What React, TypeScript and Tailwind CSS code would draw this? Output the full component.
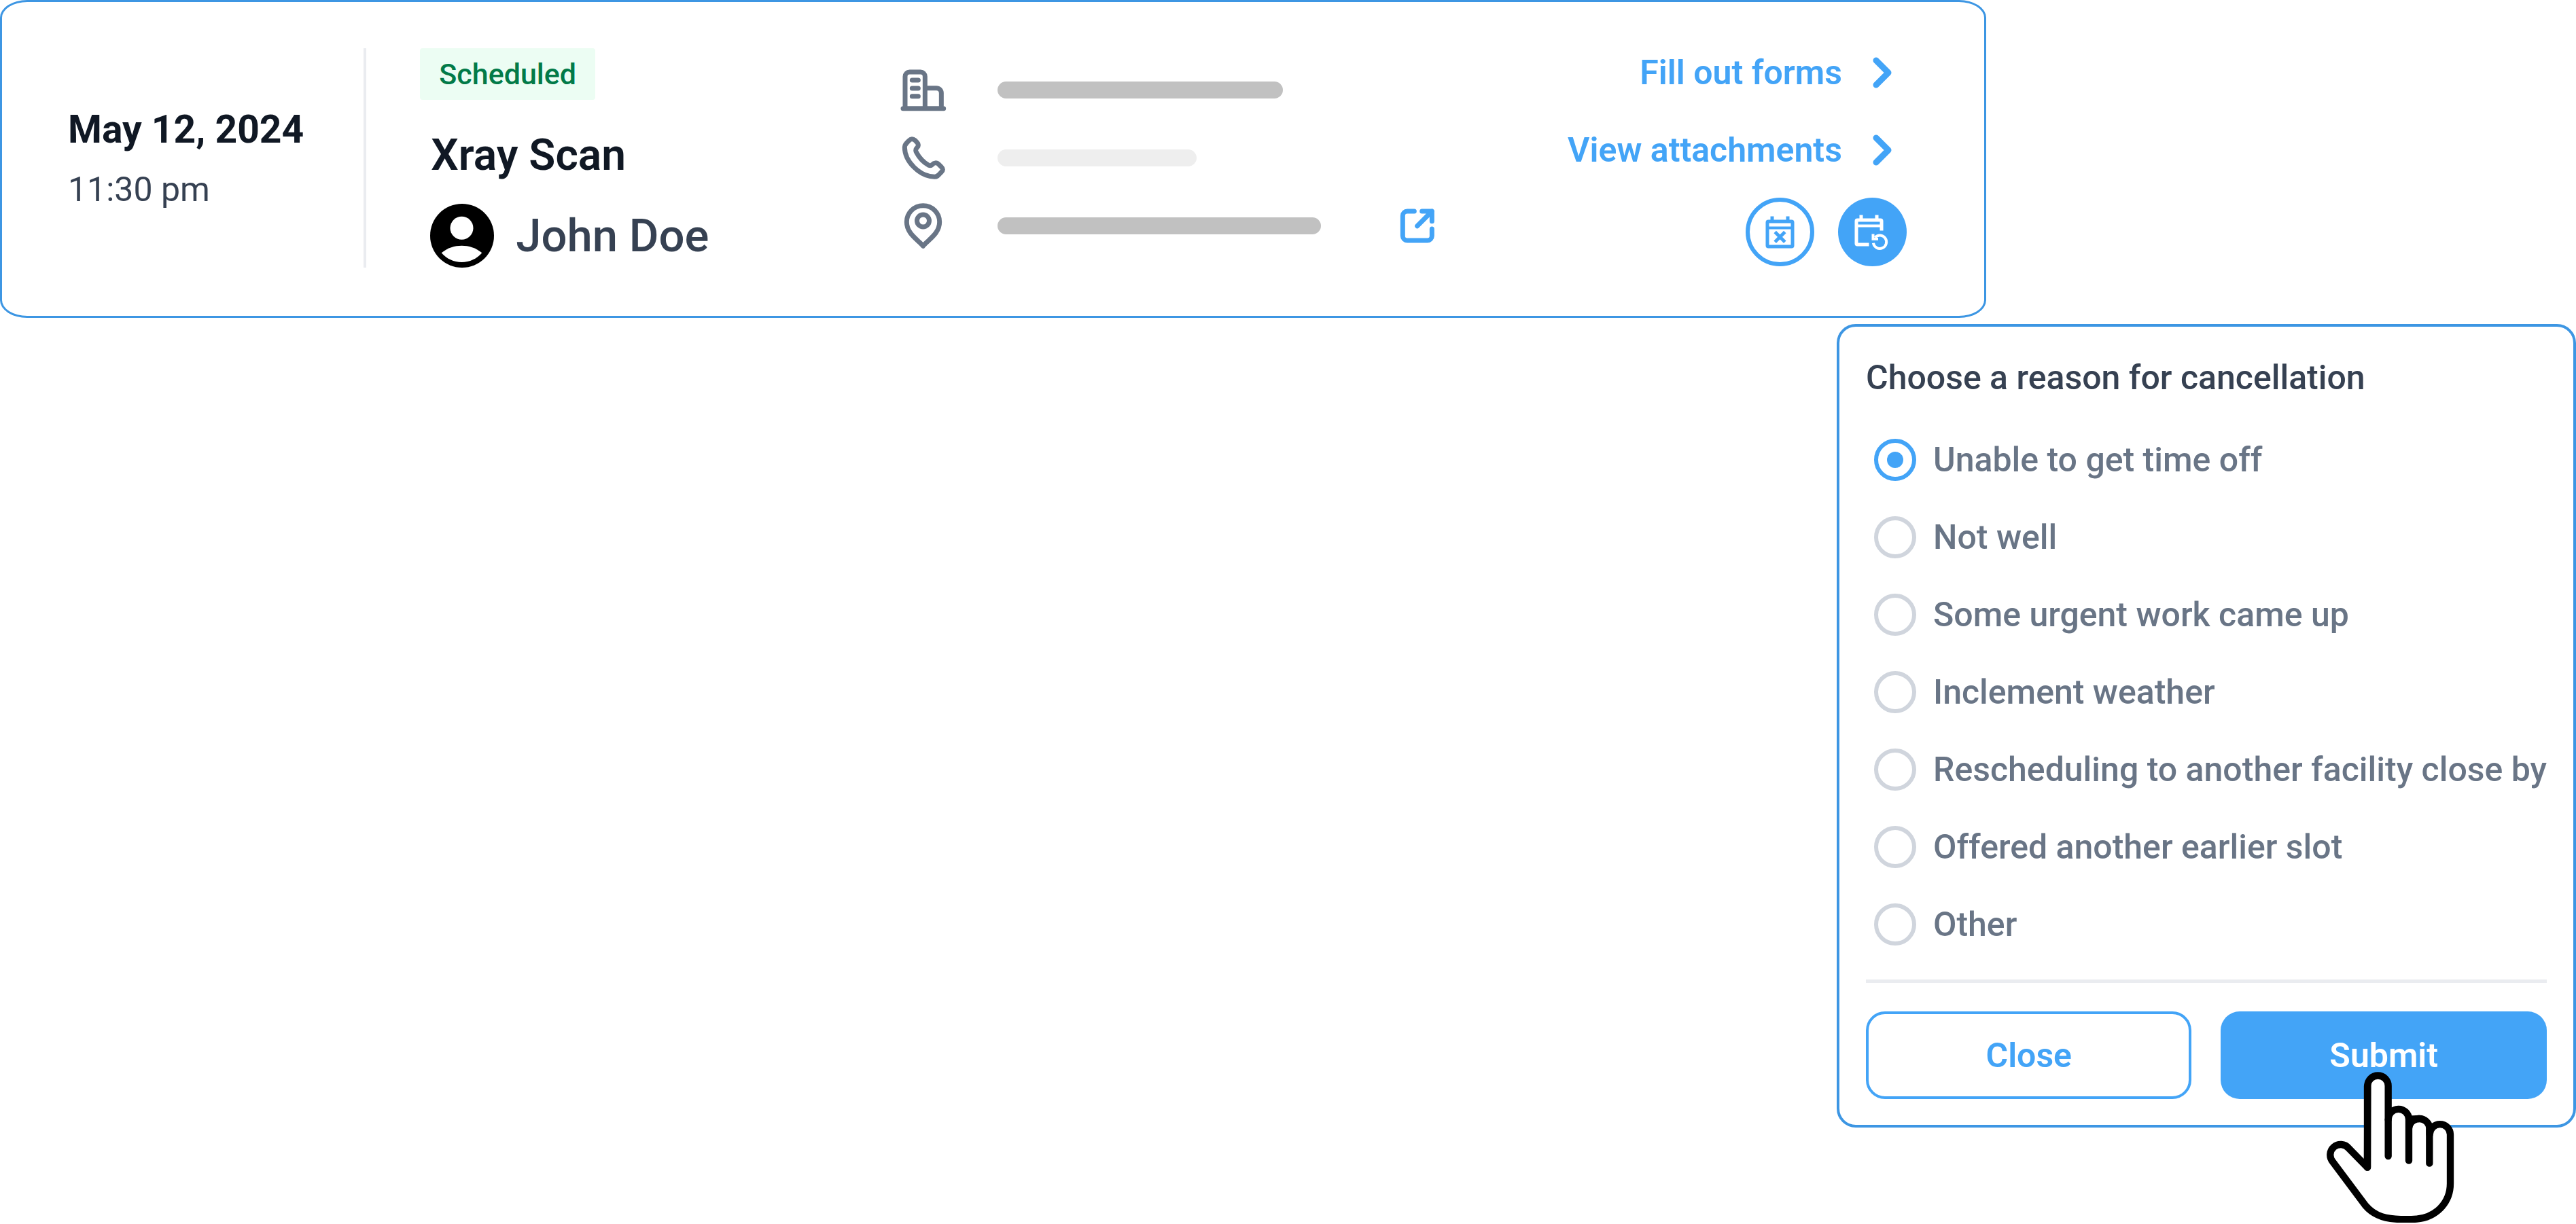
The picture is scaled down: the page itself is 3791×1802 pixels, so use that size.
const REASONS = [
  "Unable to get time off",
  "Not well",
  "Some urgent work came up",
  "Inclement weather",
  "Rescheduling to another facility close by",
  "Offered another earlier slot",
  "Other",
];

function AvatarIcon() {
  return (
    <svg viewBox="0 0 94 94" className="size-[94px] shrink-0" aria-hidden="true">
      <circle cx="47" cy="47" r="47" fill="#000" />
      <circle cx="46.5" cy="35.7" r="17" fill="#fff" />
      <path
        d="M16.7 72.3C26 64.5 36 61.7 46.5 61.7S67 64.5 76.3 72.3C69 81 58 86 46.5 86S24 81 16.7 72.3Z"
        fill="#fff"
      />
    </svg>
  );
}

const lineIcon = {
  fill: "none",
  stroke: "currentColor",
  strokeWidth: 21,
  strokeLinecap: "round",
  strokeLinejoin: "round",
  "aria-hidden": true,
} as const;

function BuildingIcon() {
  return (
    <svg viewBox="66 48 216 216" className="size-[72px] shrink-0" {...lineIcon}>
      <path d="M96 236V95a20 20 0 0 1 20-20h48a20 20 0 0 1 20 20v141M184 146h50a22 22 0 0 1 22 22v68M87 236h179M127 111h27M127 147h27M127 182h27" />
    </svg>
  );
}

function PhoneIcon() {
  return (
    <svg viewBox="66 348 216 216" className="size-[72px] shrink-0" {...lineIcon}>
      <path d="M94 407C94 396 100 391 113 378C121 369 131 369 139 376L149 386C156 393 156 402 149 409C142 416 141 421 146 430C160 457 178 474 200 487C207 490 210 490 216 484C224 475 236 474 244 482L256 494C264 502 264 509 256 517C243 531 239 538 226 538C160 536 94 470 94 407Z" />
    </svg>
  );
}

function PinIcon() {
  return (
    <svg viewBox="66 648 216 216" className="size-[72px] shrink-0" {...lineIcon}>
      <path d="M175.500 665C216 665 248 697 248 737C248 775 222 799 199 820C186 832 179 838 175.500 844C172 838 165 832 152 820C129 799 103 775 103 737C103 697 135 665 175.500 665Z" />
      <circle cx="175.500" cy="732" r="27" />
    </svg>
  );
}

function ExternalIcon() {
  return (
    <svg viewBox="60 48 156 156" className="size-[52px]" {...lineIcon}>
      <path d="M124 60H93a20 20 0 0 0-20 20v89a20 20 0 0 0 20 20h89a20 20 0 0 0 20-20v-31M158 60h44v44M202 60l-65 65" />
    </svg>
  );
}

function ChevronIcon() {
  return (
    <svg
      viewBox="0 0 28 46"
      className="h-[46px] w-[28px] shrink-0"
      fill="none"
      stroke="currentColor"
      strokeWidth="9"
      strokeLinecap="round"
      strokeLinejoin="round"
      aria-hidden="true"
    >
      <path d="M5 5l18 18L5 41" />
    </svg>
  );
}

function CalendarCancelIcon() {
  return (
    <svg viewBox="20.500 20.500 60 60" className="size-[60px]" fill="currentColor" aria-hidden="true">
      <path
        fillRule="evenodd"
        d="M34 32h3v-5h5v5h18v-5h5v5h3a4 4 0 0 1 4 4v34a4 4 0 0 1-4 4H34a4 4 0 0 1-4-4V36a4 4 0 0 1 4-4ZM35 37v5h32v-5ZM35 46v23h32V46Z"
      />
      <path d="M43.700 50.100l14.600 14.600M58.300 50.100L43.700 64.700" stroke="currentColor" strokeWidth="5" />
    </svg>
  );
}

function CalendarRescheduleIcon() {
  return (
    <svg viewBox="20.500 20.500 60 60" className="size-[60px]" fill="currentColor" aria-hidden="true">
      <path
        fillRule="evenodd"
        d="M29 30h3v-5h5v5h18v-5h5v5h3a4 4 0 0 1 4 4v14h-5v-5H30v23h16v5H29a4 4 0 0 1-4-4V34a4 4 0 0 1 4-4ZM30 35v4h32v-4Z"
      />
      <path d="M52.400 66.300A9.700 9.700 0 1 0 54.800 58.200" fill="none" stroke="currentColor" strokeWidth="4" />
      <path d="M50 53h4v5.500h5.500v3.700H50Z" />
    </svg>
  );
}

function HandCursor() {
  return (
    <svg
      viewBox="0 0 660 696"
      className="pointer-events-none absolute top-20 right-[118px] h-[232px] w-[220px]"
      fill="none"
      stroke="#000"
      strokeWidth="31"
      strokeLinecap="round"
      strokeLinejoin="round"
      aria-hidden="true"
    >
      <path
        fill="#fff"
        d="M222 449L139 364A45 45 0 0 0 69 424L213 617C245 655 285 673 345 677C375 679 410 679 440 677C520 670 588 610 588 520V304A45.500 45.500 0 0 0 497 304V279A45.500 45.500 0 0 0 450 234L405 236A45.500 45.500 0 0 0 314 238V89A45.500 45.500 0 0 0 223 89Z"
      />
      <path d="M222 89V449M314 238V399M405 238V419M405 279A45.500 45.500 0 0 1 450 234M496 279V431" />
    </svg>
  );
}

function LinkRow({ label }: { label: string }) {
  return (
    <a href="#" className="flex items-center gap-[45px] pr-[22px] text-[50px] leading-[72px] font-semibold whitespace-nowrap">
      {label}
      <ChevronIcon />
    </a>
  );
}

function AppointmentCard() {
  return (
    <section className="flex w-[77.1%] rounded-[40px/26px] border-3 border-[#3d96e3] bg-white pt-[68px] pr-[114px] pb-[71px] pl-[97px]">
      <div className="flex flex-col justify-center gap-6 pr-[88px] whitespace-nowrap">
        <h2 className="text-[57px] leading-[68px] font-bold text-[#101824]">May 12, 2024</h2>
        <p className="text-[50px] leading-[60px] text-[#364152]">11:30 pm</p>
      </div>
      <div className="mr-[79px] w-1 shrink-0 bg-[#eaecf0]" />
      <div className="grid flex-1 grid-cols-[704fr_1484fr]">
        <div className="flex flex-col items-start">
          <span className="rounded-sm bg-[#ecfdf3] px-7 text-[43px] leading-[76px] font-medium text-[#027a48]">
            Scheduled
          </span>
          <h3 className="mt-[42px] pl-4 text-[64px] leading-[80px] font-semibold text-[#101824]">Xray Scan</h3>
          <div className="mt-[31px] flex items-center gap-8 pl-[15px]">
            <AvatarIcon />
            <span className="text-[67px] leading-[80px] font-medium text-[#364152]">John Doe</span>
          </div>
        </div>
        <div className="flex justify-between">
          <ul className="flex flex-col justify-center gap-7 text-[#697586]">
            <li className="flex items-center gap-[74px]">
              <BuildingIcon />
              <span className="h-[25px] w-[420px] rounded-full bg-[#c1c1c1]" />
            </li>
            <li className="flex items-center gap-[74px]">
              <PhoneIcon />
              <span className="h-[25px] w-[293px] rounded-full bg-[#eeeeee]" />
            </li>
            <li className="flex items-center gap-[74px]">
              <PinIcon />
              <span className="h-[25px] w-[476px] rounded-full bg-[#c1c1c1]" />
              <a href="#" aria-label="Open location" className="ml-[42px] text-[#43a4f7]">
                <ExternalIcon />
              </a>
            </li>
          </ul>
          <div className="flex flex-col items-end text-[#43a4f7]">
            <LinkRow label="Fill out forms" />
            <div className="mt-[42px]">
              <LinkRow label="View attachments" />
            </div>
            <div className="mt-[34px] flex gap-[35px]">
              <button
                type="button"
                aria-label="Cancel appointment"
                className="flex size-[101px] items-center justify-center rounded-full border-6 border-[#43a4f7]"
              >
                <CalendarCancelIcon />
              </button>
              <button
                type="button"
                aria-label="Reschedule appointment"
                className="flex size-[101px] items-center justify-center rounded-full bg-[#43a4f7] text-white"
              >
                <CalendarRescheduleIcon />
              </button>
            </div>
          </div>
        </div>
      </div>
    </section>
  );
}

function CancellationDialog() {
  return (
    <form
      className="mt-[9px] ml-auto w-[28.7%] rounded-[28px] border-4 border-[#3d96e3] bg-white px-[39px] pt-[45px] pb-[38px]"
      onSubmit={(e) => e.preventDefault()}
    >
      <fieldset>
        <legend className="text-[50px] leading-[60px] font-medium text-[#364152]">
          Choose a reason for cancellation
        </legend>
        <div className="flex flex-col gap-[52px] pt-[60px] pl-3">
          {REASONS.map((reason, i) => (
            <label
              key={reason}
              className="flex items-center gap-[25px] text-[50px] leading-[62px] font-medium whitespace-nowrap text-[#697586]"
            >
              <input
                type="radio"
                name="reason"
                defaultChecked={i === 0}
                className="grid size-[62px] shrink-0 appearance-none place-content-center rounded-full border-6 border-[#d0d5dd] before:size-6 before:rounded-full checked:border-[#43a4f7] checked:before:bg-[#43a4f7]"
              />
              {reason}
            </label>
          ))}
        </div>
      </fieldset>
      <hr className="mt-[50px] border-t-5 border-[#eaecf0]" />
      <div className="relative mt-[42px] grid grid-cols-2 gap-[43px] text-[50px] leading-[60px] font-semibold">
        <button type="button" className="h-[129px] rounded-[28px] border-4 border-[#43a4f7] text-[#43a4f7]">
          Close
        </button>
        <button type="submit" className="h-[129px] rounded-[28px] bg-[#43a4f7] text-white">
          Submit
        </button>
        <HandCursor />
      </div>
    </form>
  );
}

export default function App() {
  return (
    <main className="bg-white pb-35 font-['Roboto',sans-serif]">
      <AppointmentCard />
      <CancellationDialog />
    </main>
  );
}
